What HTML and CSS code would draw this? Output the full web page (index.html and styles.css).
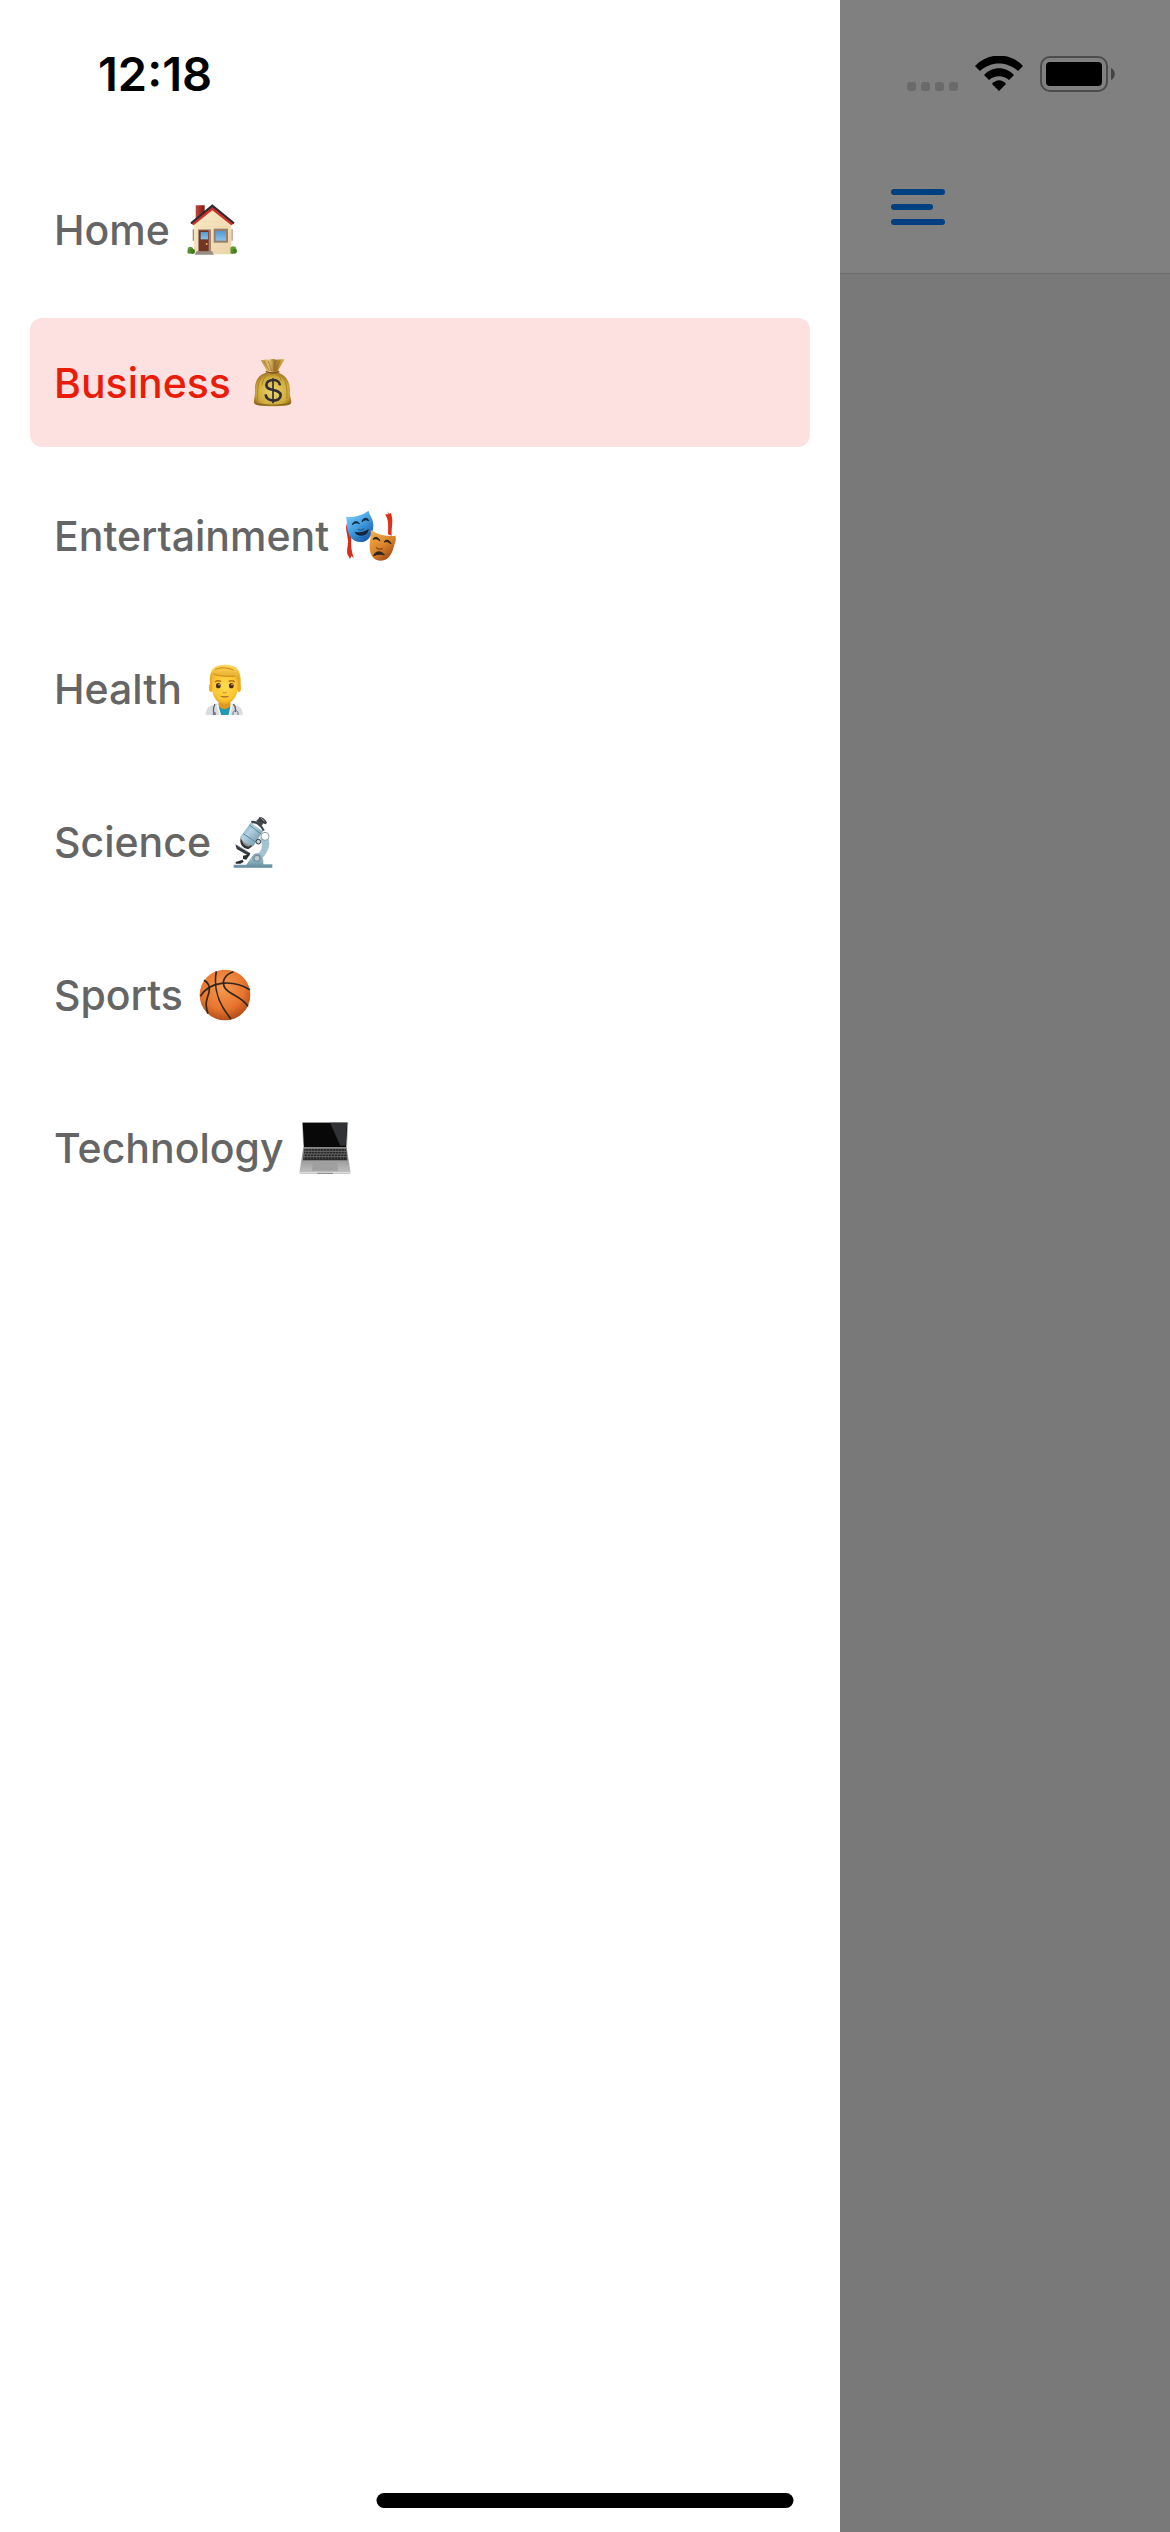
FILE: index.html
```html
<!DOCTYPE html>
<html lang="en">
<head>
<meta charset="utf-8">
<meta name="viewport" content="width=device-width, initial-scale=1">
<title>News</title>
<link rel="stylesheet" href="styles.css">
</head>
<body>
<div class="app">
  <aside class="drawer">
    <div class="status-bar status-left"><time class="clock">12:18</time></div>
    <nav class="menu">
      <a class="menu-item" href="#home">Home
        <svg class="emoji" viewBox="46 42 156 156" aria-hidden="true">
          <defs>
            <linearGradient id="chimney"><stop stop-color="#c34a40"/><stop offset="1" stop-color="#7c1510"/></linearGradient>
            <linearGradient id="pane" x2="0" y2="1"><stop stop-color="#5598d0"/><stop offset="1" stop-color="#86c2ea"/></linearGradient>
            <linearGradient id="wall" x2="1" y2="1"><stop stop-color="#faebc9"/><stop offset="1" stop-color="#ecd4a9"/></linearGradient>
          </defs>
          <path d="M75 46h27v35l-27 20z" fill="url(#chimney)"/>
          <path d="M66 118h5v34h-5zM182 118h4v34h-4z" fill="#a88e80"/>
          <path d="M70 100l55-45 57 45v93H70z" fill="url(#wall)"/>
          <path d="M72 130h110M72 145h110M72 160h110M72 175h110M90 95h70M80 110h90" stroke="#e6cfa4" stroke-width="1"/>
          <circle cx="59" cy="178" r="8" fill="#619a2f"/><circle cx="65" cy="184" r="8" fill="#427b20"/><circle cx="56" cy="185" r="6" fill="#528b29"/>
          <circle cx="188" cy="178" r="9" fill="#619a2f"/><circle cx="192" cy="184" r="7" fill="#427b20"/><circle cx="185" cy="186" r="6" fill="#528b29"/>
          <path d="M125 61L69 106l-9-6 65-52 66 52-9 6z" fill="#cf3029"/>
          <path d="M61 100l64-53 65 53" fill="none" stroke="#292c30" stroke-width="6"/>
          <path d="M82 118h39v70H82z" fill="#a48877"/><path d="M85 121h29v64H85z" fill="#743422"/>
          <path d="M90 126h22v22H90z" fill="url(#pane)"/><circle cx="108" cy="162" r="3" fill="#eabb45"/>
          <path d="M129 116h43v42h-43z" fill="#987d6b"/><path d="M135 123h31v29h-31z" fill="url(#pane)"/>
          <path d="M77 184h48l4 10H73z" fill="#978d86"/>
        </svg>
      </a>
      <a class="menu-item active" href="#business" aria-current="page">Business
        <svg class="emoji" viewBox="20 50 156 156" aria-hidden="true">
          <defs>
            <radialGradient id="sack" cy=".55" r=".6"><stop stop-color="#edd66c"/><stop offset=".7" stop-color="#cfac3b"/><stop offset="1" stop-color="#95671f"/></radialGradient>
            <linearGradient id="neck"><stop stop-color="#b78635"/><stop offset=".35" stop-color="#e2c571"/><stop offset=".6" stop-color="#a37225"/><stop offset="1" stop-color="#dab85b"/></linearGradient>
          </defs>
          <path d="M78 97C51 104 42 126 44 155c0 15-4 23-3 31 2 9 16 12 56 12s54-3 56-12c0-9-5-17-4-31 1-28-10-50-35-58z" fill="url(#sack)"/>
          <path d="M61 58c8 4 14-1 21 0 7 1 12-4 20-1 7 3 14-1 31 0L114 89l1 10H78V89z" fill="url(#neck)"/>
          <path d="M71 63l16 29M84 62l9 29M103 61l-3 30M119 61l-14 30" stroke="#8f6424" stroke-width="2" fill="none"/>
          <path d="M76 94c13 5 28 5 41 0" stroke="#80521d" stroke-width="4" fill="none"/>
          <path d="M63 111c-10 15-12 37-11 66M80 103c-8 8-13 18-15 32M127 109c10 14 14 36 13 67M113 103c6 6 8 12 10 18" stroke="#ae8429" stroke-width="3" fill="none"/>
          <path d="M43 184c11 11 97 11 108 0v6c-8 8-100 8-108 0z" fill="#8b681f"/>
          <path d="M119 135c-1-22-42-20-41-1 0 21 42 9 43 31 0 21-44 22-45-3" fill="none" stroke="#342d34" stroke-width="8"/>
          <path d="M98 114v75" stroke="#342d34" stroke-width="5"/>
        </svg>
      </a>
      <a class="menu-item" href="#entertainment">Entertainment
        <svg class="emoji" viewBox="33 43 156 156" aria-hidden="true">
          <defs>
            <linearGradient id="comedy" x2=".7" y2="1"><stop stop-color="#88d4ff"/><stop offset=".5" stop-color="#47a5e5"/><stop offset="1" stop-color="#1859a9"/></linearGradient>
            <linearGradient id="tragedy" x2=".7" y2="1"><stop stop-color="#f8b44e"/><stop offset=".6" stop-color="#d98129"/><stop offset="1" stop-color="#9f4813"/></linearGradient>
          </defs>
          <path d="M37 87c-3 18 5 31 5 52-1 17-4 24-2 36l8 15 4-9 8 6c-11-25-8-51-8-67-1-14-9-18-9-31z" fill="#d52d17"/>
          <path d="M160 47l3 9-10 0c11 16 10 30 9 60l11 4c-1-25 4-37 1-55l-3-13-6 2z" fill="#db321c"/>
          <path d="M36 63c20 3 43-1 68-18 3 16 15 25 14 45-1 27-16 48-35 49-30 1-39-20-43-40-3-15 0-22-4-36z" fill="url(#comedy)"/>
          <path d="M55 87c3-11 16-12 21-3-7-4-14-3-21 3zM84 78c3-13 17-13 20-3-7-4-13-3-20 3z" fill="#17253b" stroke="#17253b" stroke-width="3"/>
          <path d="M62 108c17 4 31 0 42-8 0 12-9 19-21 20-11 0-19-4-21-12z" fill="#13243b"/><path d="M72 100c6 6 14 4 18-3" fill="none" stroke="#236491" stroke-width="4"/>
          <path d="M110 103c20 14 44 20 74 17 4 12-1 20-4 31-6 24-17 44-39 44-23 0-34-18-34-42 0-22 5-28 3-50z" fill="url(#tragedy)"/>
          <path d="M117 131c4-9 16-8 21 5-7-7-13-8-21-5zM150 139c7-9 17-6 21 6-7-7-13-9-21-6z" fill="#252320" stroke="#252320" stroke-width="3"/>
          <path d="M119 180c4-13 22-17 32-2-10-4-21-3-32 2z" fill="#2c2420" stroke="#2c2420" stroke-width="3"/><path d="M127 155c2 6 13 7 19 3" fill="none" stroke="#8d4b1f" stroke-width="4"/>
        </svg>
      </a>
      <a class="menu-item" href="#health">Health
        <svg class="emoji" viewBox="25 37 156 156" aria-hidden="true">
          <defs>
            <radialGradient id="face" cy=".4" r=".65"><stop stop-color="#ffdc50"/><stop offset=".7" stop-color="#fcc532"/><stop offset="1" stop-color="#e49b19"/></radialGradient>
            <linearGradient id="hair" x2="0" y2="1"><stop stop-color="#ffd95a"/><stop offset="1" stop-color="#dc9a1b"/></linearGradient>
          </defs>
          <path d="M48 195c0-20 6-28 23-32l15-5h36l15 5c17 5 22 14 22 32z" fill="#d9dbe0"/>
          <path d="M84 166l20 5 20-5-2 29H95z" fill="#239aad"/>
          <path d="M87 149h35v17c-9 11-25 12-35 0z" fill="#e0991c"/>
          <path d="M61 100c-5-40 10-57 44-58 34 0 51 18 48 58l-6 17H67z" fill="url(#hair)"/>
          <ellipse cx="64" cy="111" rx="6" ry="13" fill="#edaa28"/><ellipse cx="148" cy="111" rx="6" ry="13" fill="#edaa28"/>
          <path d="M67 90c2-12 14-18 38-18 23 0 36 6 39 18 4 41-11 67-39 70-28-1-42-30-38-70z" fill="url(#face)"/>
          <path d="M63 91c-3-21 4-39 22-45 27-7 56 0 63 17 3 10 2 19 0 30-3-10-8-16-17-17-22 2-42 2-55-5-7 3-10 10-13 20z" fill="url(#hair)"/>
          <path d="M71 69c17 10 42 7 64 8M77 57c15-9 39-6 54 1" fill="none" stroke="#c98615" stroke-width="3"/>
          <path d="M76 94c6-5 12-5 18-1M117 93c6-4 13-3 18 1" fill="none" stroke="#ab701b" stroke-width="4"/>
          <ellipse cx="86" cy="105" rx="7" ry="8" fill="#4c2b13"/><ellipse cx="125" cy="105" rx="7" ry="8" fill="#4c2b13"/><circle cx="88" cy="102" r="2" fill="#fff"/><circle cx="127" cy="102" r="2" fill="#fff"/>
          <path d="M99 125q6 4 12 0" fill="none" stroke="#d18a20" stroke-width="3"/><path d="M90 135q15 4 30 0-15 11-30 0z" fill="#9d5927"/>
          <path d="M83 162l9 33M126 162l-7 33" stroke="#f7f7f9" stroke-width="5"/><path d="M76 160c-6 12-7 20-2 32M131 160c6 8 8 16 6 24" stroke="#5c646d" stroke-width="4" fill="none"/><circle cx="74" cy="189" r="5" fill="#737b81"/><path d="M130 193v-7c2-8 14-8 15 0v7" stroke="#6b727a" stroke-width="3" fill="none"/>
        </svg>
      </a>
      <a class="menu-item" href="#science">Science
        <svg class="emoji" viewBox="29 46 156 156" aria-hidden="true">
          <defs>
            <linearGradient id="tube" x2="1" y2="1"><stop stop-color="#689bb4"/><stop offset=".4" stop-color="#b3d0df"/><stop offset="1" stop-color="#5d8598"/></linearGradient>
            <linearGradient id="base" x2="0" y2="1"><stop stop-color="#bed7e1"/><stop offset="1" stop-color="#61899d"/></linearGradient>
          </defs>
          <path d="M143 96c22 25 14 52-8 77l-30 15-1-17c26-11 37-30 24-58z" fill="#a4c3d1"/>
          <path d="M49 192h38l17-25c10-12 34-4 34 12v12h27v10H49z" fill="url(#base)"/>
          <path d="M54 131l45 27-4 8-37-21z" fill="#353b41"/><path d="M61 135l32 19" stroke="#a0aeb5" stroke-width="3"/>
          <path d="M55 184l21-7 3 7-10 5H55zM77 165l21-4-11 16-10-2z" fill="#292e33"/>
          <path d="M70 110l37 25-13 10c-12 0-23-9-25-22z" fill="#313436"/><path d="M74 110l30 21-9 7c-11-1-20-9-21-20z" fill="#918985"/>
          <path d="M100 66l37 26-28 43c-20 0-35-10-40-26z" fill="url(#tube)"/><path d="M96 73l35 27M78 99l34 23" stroke="#55879f" stroke-width="3"/>
          <path d="M102 65c12-5 31 9 37 25" fill="none" stroke="#39444b" stroke-width="7"/><path d="M116 61l17 15 6-10-15-12z" fill="#46494c"/>
          <path d="M127 48c11 2 17 8 22 18l-4 5c-8-2-16-8-22-15z" fill="#383c40"/><path d="M129 51l13 11" stroke="#97a0a5" stroke-width="3"/>
          <circle cx="143" cy="107" r="12" fill="#fff" stroke="#929da3" stroke-width="3"/><circle cx="123" cy="123" r="7" fill="#c6cfd4" stroke="#30363a" stroke-width="3"/>
          <circle cx="119" cy="173" r="15" fill="#84a6b7"/><circle cx="119" cy="173" r="9" fill="#c0cbd0" stroke="#718590" stroke-width="3"/>
        </svg>
      </a>
      <a class="menu-item" href="#sports">Sports
        <svg class="emoji" viewBox="33 40 156 156" aria-hidden="true">
          <defs><radialGradient id="ball" cx=".45" cy=".35" r=".65"><stop stop-color="#f79a50"/><stop offset=".65" stop-color="#e8762f"/><stop offset="1" stop-color="#b64e1a"/></radialGradient></defs>
          <circle cx="111" cy="118" r="76" fill="url(#ball)"/>
          <path d="M37 122c26-44 94-53 149-20M85 47c-9 49 2 93 44 143M136 48c-30 10-35 33-25 49 13 20 51 26 69 55M48 74c21 12 18 31 10 52-6 17-5 30 2 48" fill="none" stroke="#30261f" stroke-width="5"/>
        </svg>
      </a>
      <a class="menu-item" href="#technology">Technology
        <svg class="emoji" viewBox="23 50 156 156" aria-hidden="true">
          <defs><linearGradient id="deck" x2="0" y2="1"><stop stop-color="#777"/><stop offset="1" stop-color="#c5c5c5"/></linearGradient></defs>
          <path d="M32 51h139l-4 79H36z" fill="#b5b5b5"/><path d="M34 52h134l-4 74H38z" fill="#080808"/><path d="M116 52h51l-4 69h-16z" fill="#303236"/>
          <path d="M36 127h130l12 75-4 5H28l-4-5z" fill="url(#deck)"/>
          <path d="M39 131h125l4 34H35z" fill="#292929"/>
          <path d="M39 138h126M38 146h128M37 154h129" stroke="#8b8b8b" stroke-width="2"/>
          <path d="M42 134h121M41 142h123M40 150h126M39 159h127" stroke="#858585" stroke-width="6" stroke-dasharray="1 8"/>
          <path d="M65 168h72l3 28H62z" fill="#9f9f9f"/><path d="M25 202h152" stroke="#dedede" stroke-width="4"/><path d="M78 204h47" stroke="#858585" stroke-width="3"/>
        </svg>
      </a>
    </nav>
  </aside>
  <main class="screen">
    <div class="status-bar status-right">
      <svg class="signal" viewBox="0 0 51 36" aria-hidden="true"><g fill="#6a6a6a"><rect y="26" width="9" height="9" rx="3"/><rect x="14" y="26" width="9" height="9" rx="3"/><rect x="28" y="26" width="9" height="9" rx="3"/><rect x="42" y="26" width="9" height="9" rx="3"/></g></svg>
      <svg class="wifi" viewBox="0 0 48 36" aria-hidden="true"><path d="M0 10C13-4 35-4 48 10l-5 5C32 5 16 5 5 15z"/><path d="M9 19c8-9 22-9 30 0l-5 5c-6-5-14-5-20 0z"/><path d="M17 28c4-5 10-5 14 0l-7 7z"/></svg>
      <svg class="battery" viewBox="0 0 75 36" aria-hidden="true"><rect x="1" y="1" width="66" height="34" rx="9" fill="none" stroke="#4c4c4c" stroke-width="2"/><rect x="6" y="6" width="56" height="24" rx="4"/><path d="M71 12c5 2 5 10 0 12z" fill="#434343"/></svg>
    </div>
    <header class="header">
      <button class="menu-button" type="button" aria-label="Close menu">
        <svg class="menu-icon" viewBox="0 0 54 36" aria-hidden="true"><path d="M3 3h48M3 18h36M3 33h48" stroke="#003f80" stroke-width="6" stroke-linecap="round"/></svg>
      </button>
    </header>
  </main>
  <div class="home-indicator"></div>
</div>
</body>
</html>
```
FILE: styles.css
```css
* {
  box-sizing: border-box;
}

body {
  margin: 0;
  font-family: Inter, "Liberation Sans", sans-serif;
}

svg {
  display: block;
  flex: none;
}

.app {
  display: grid;
  grid-template-columns: 28fr 11fr;
  min-height: 100vh;
}

.drawer {
  background: #fff;
}

.status-bar {
  display: flex;
  align-items: center;
  height: 141px;
  padding-bottom: 9px;
  padding-top: 16px;
}

.status-left {
  padding-left: 98px;
}

.clock {
  font-size: 47px;
  font-weight: 600;
  line-height: 56px;
  color: #000;
}

.menu {
  display: flex;
  flex-direction: column;
  gap: 24px;
  padding: 24px 30px;
}

.menu-item {
  display: flex;
  align-items: center;
  gap: 16px;
  min-height: 129px;
  padding: 0 24px;
  border-radius: 12px;
  color: #656565;
  font-size: 41px;
  font-weight: 500;
  line-height: 50px;
  text-decoration: none;
}

.menu-item.active {
  background: #fde1e1;
  color: #e91c09;
}

.emoji {
  width: 52px;
  height: 52px;
}

.screen {
  background: #797979;
}

.status-right {
  justify-content: flex-end;
  gap: 17px;
  padding-right: 55px;
  background: #808080;
}

.signal {
  width: 51px;
  height: 36px;
}

.wifi {
  width: 48px;
  height: 36px;
}

.battery {
  width: 75px;
  height: 36px;
}

.header {
  display: flex;
  align-items: center;
  height: 133px;
  padding-left: 51px;
  background: #808080;
  border-bottom: 1px solid #6d6d6d;
}

.menu-button {
  padding: 0;
  border: 0;
  background: none;
}

.menu-icon {
  width: 54px;
  height: 36px;
}

.home-indicator {
  position: fixed;
  bottom: 24px;
  left: 50%;
  width: 417px;
  height: 15px;
  border-radius: 8px;
  background: #000;
  transform: translateX(-50%);
}
```
